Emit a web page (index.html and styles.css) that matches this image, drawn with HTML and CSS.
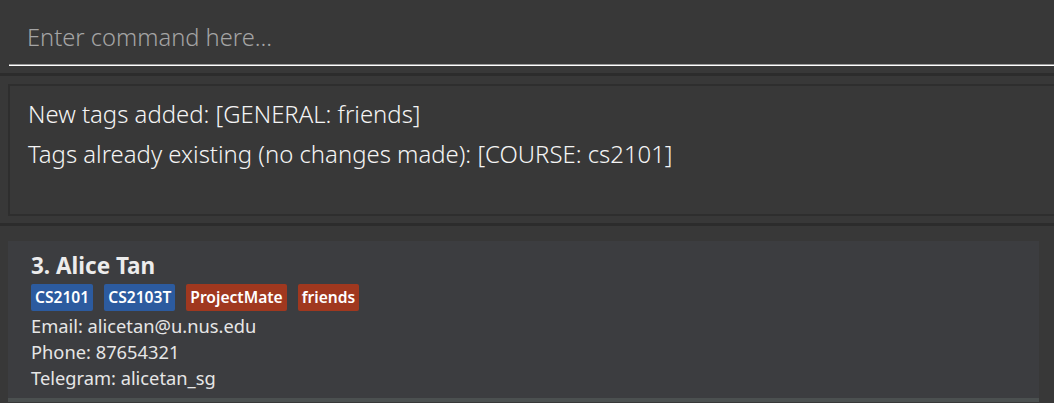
FILE: index.html
```html
<!DOCTYPE html>
<html>
<head>
<meta charset="utf-8">
<link rel="stylesheet" href="styles.css">
</head>
<body>
<div class="app">
  <div class="command-wrap">
    <div class="command-box">
      <span class="placeholder">Enter command here...</span>
    </div>
  </div>
  <div class="separator separator-top"></div>
  <div class="result-wrap">
    <div class="result-box">
      <div class="result-line">New tags added: [GENERAL: friends]</div>
      <div class="result-line">Tags already existing (no changes made): [COURSE: cs2101]</div>
    </div>
  </div>
  <div class="separator separator-bottom"></div>
  <div class="list">
    <div class="card">
      <div class="name">3. Alice Tan</div>
      <div class="tags">
        <span class="tag tag-course">CS2101</span>
        <span class="tag tag-course">CS2103T</span>
        <span class="tag tag-general">ProjectMate</span>
        <span class="tag tag-general">friends</span>
      </div>
      <div class="detail">Email: alicetan@u.nus.edu</div>
      <div class="detail">Phone: 87654321</div>
      <div class="detail">Telegram: alicetan_sg</div>
    </div>
    <div class="card-next"></div>
  </div>
</div>
</body>
</html>
```

FILE: styles.css
```css
html, body {
  margin: 0;
  padding: 0;
  background: #383838;
  overflow: hidden;
}
body {
  font-family: "Noto Sans", "Open Sans", sans-serif;
  width: 1054px;
  height: 403px;
}
.app {
  display: flex;
  flex-direction: column;
}
.command-wrap {
  padding-left: 9px;
}
.command-box {
  height: 65px;
  box-sizing: border-box;
  border-bottom: 1px solid #9a9a9a;
  box-shadow: 0 1px 0 #ffffff;
  display: flex;
  align-items: flex-start;
  padding: 20px 0 0 18px;
  margin-bottom: 1px;
}
.placeholder {
  font-size: 23.7px;
  font-weight: 300;
  color: #a4a4a4;
  line-height: 34px;
}
.separator {
  height: 3px;
  background: #2c2c2c;
}
.separator-top {
  margin: 7px 0 8px;
}
.separator-bottom {
  margin: 7px 0 0;
}
.result-wrap {
  padding-left: 8px;
  margin-right: -20px;
}
.result-box {
  height: 132px;
  box-sizing: border-box;
  border: 2px solid #2e2e2e;
  padding: 8px 18px;
}
.result-line {
  font-size: 23.9px;
  font-weight: 300;
  color: #f4f4f4;
  line-height: 40px;
}
.list {
  padding: 15px 15px 0 8px;
}
.card {
  background: #3c3d40;
  height: 157px;
  box-sizing: border-box;
  padding: 9px 23px;
}
.card-next {
  height: 4px;
  background: #4b5050;
}
.name {
  font-size: 22.5px;
  font-weight: bold;
  color: #ececec;
  line-height: 32px;
}
.tags {
  display: flex;
  gap: 11px;
  margin-top: 2px;
  margin-bottom: 2px;
}
.tag {
  font-size: 15.6px;
  font-weight: 600;
  color: #ffffff;
  border-radius: 2px;
  padding: 0 4px;
  height: 27px;
  line-height: 27px;
}
.tag-course {
  background: #2c5b9f;
}
.tag-general {
  background: #a0381f;
}
.detail {
  font-size: 18.3px;
  color: #e6e6e6;
  line-height: 26px;
}
```
